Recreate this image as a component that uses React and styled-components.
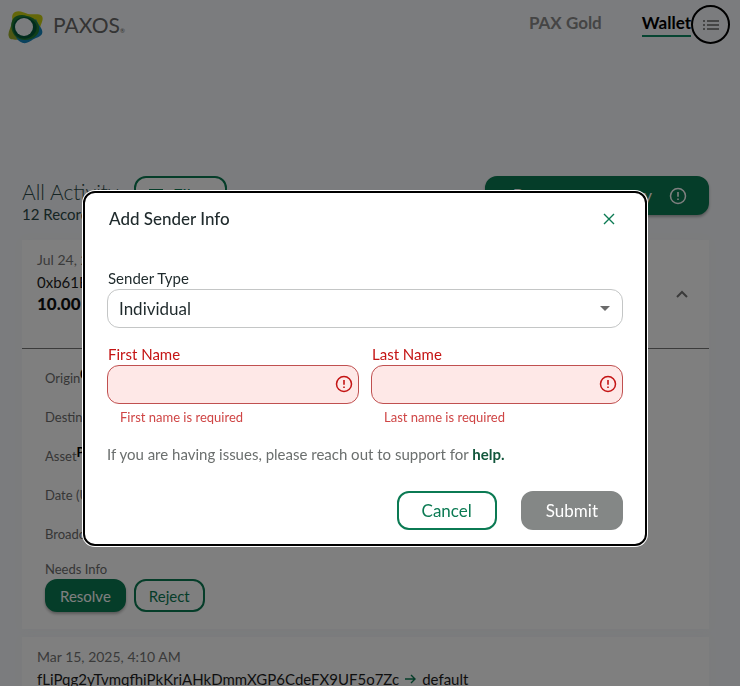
import React from 'react'
import styled, { createGlobalStyle } from 'styled-components'

const GlobalStyle = createGlobalStyle`
  * { box-sizing: border-box; }
  body {
    margin: 0;
    height: 100vh;
    overflow: hidden;
    background: #f7f9fc;
    color: #1f2a2c;
    font-family: Lato, "Open Sans", sans-serif;
    font-size: 15px;
  }
  button, input, select { font-family: inherit; }
  button { cursor: pointer; }
`

const Header = styled.header`
  display: flex;
  align-items: flex-start;
  justify-content: space-between;
  height: 48px;
  padding: 5px 10px 0 8px;
`

const Brand = styled.a`
  display: flex;
  align-items: center;
  gap: 9px;
  padding-top: 3px;
  color: #686868;
  font-size: 21px;
  line-height: 34px;
  text-decoration: none;
  small { font-size: 6px; }
`

const Nav = styled.nav`
  display: flex;
  align-items: flex-start;
`

const NavLink = styled.a`
  margin-left: 40px;
  padding-top: 6px;
  font-size: 17px;
  font-weight: 700;
  line-height: 24px;
  text-decoration: none;
  color: ${p => (p.$active ? '#000' : '#8a8a8a')};
  border-bottom: 2px solid ${p => (p.$active ? '#0f8a64' : 'transparent')};
`

const MenuButton = styled.button`
  display: flex;
  align-items: center;
  justify-content: center;
  width: 39px;
  height: 39px;
  padding: 0;
  border: 2px solid #000;
  border-radius: 50%;
  background: transparent;
  color: #8a8a8a;
`

const Main = styled.main`
  padding: 128px 31px 0 22px;
`

const ActivityBar = styled.div`
  display: flex;
  align-items: flex-start;
  height: 64px;
`

const Heading = styled.div`
  width: 112px;
  white-space: nowrap;
  color: #2d4a48;
  h1 {
    margin: 0;
    padding-top: 3px;
    font-size: 21px;
    font-weight: 300;
    line-height: 26px;
  }
  p {
    margin: 0;
    line-height: 18px;
  }
`

const Button = styled.button`
  display: flex;
  align-items: center;
  justify-content: center;
  gap: 10px;
  height: ${p => (p.$small ? '33px' : '39px')};
  padding: 0 ${p => (p.$small ? '13px' : '23px')};
  border: 2px solid #0b7a53;
  border-radius: 12px;
  background: #fff;
  color: #0b7a53;
  font-size: ${p => (p.$small ? '15px' : '17px')};
`

const FilterButton = styled(Button)`
  padding: 0 13px;
`

const FilledButton = styled(Button)`
  background: #0b7a53;
  color: #fff;
  box-shadow: 0 2px 3px rgba(0, 0, 0, 0.3);
`

const SubmitButton = styled(Button)`
  border-color: #848786;
  background: #848786;
  color: #fff;
`

const PendingButton = styled(FilledButton)`
  margin-left: auto;
  padding: 0 20px 0 26px;
  gap: 17px;
`

const Card = styled.section`
  margin-bottom: 8px;
  background: #fff;
  box-shadow: 0 0 12px #f4f6f8;
`

const Summary = styled.div`
  display: flex;
  align-items: center;
  justify-content: space-between;
  height: 109px;
  padding: 0 20px 0 15px;
  border-bottom: ${p => (p.$open ? '1px solid #777' : '0')};
`

const Lines = styled.div`
  align-self: flex-start;
  padding-top: 9px;
  color: #1c1c1c;
  line-height: 22px;
  time {
    display: block;
    color: #757575;
    font-size: 14px;
  }
  strong {
    display: block;
    color: #111;
    font-size: 17px;
    font-weight: 900;
  }
`

const Address = styled.div`
  display: flex;
  align-items: center;
  gap: 5px;
  svg { color: #0b7a53; }
`

const Details = styled.div`
  padding: 10px 23px 17px;
`

const DetailRow = styled.div`
  height: 39px;
  color: #6d6d6d;
  font-size: 13px;
  line-height: 38px;
  b {
    color: #000;
    vertical-align: 4px;
    line-height: 1;
  }
`

const NeedsInfo = styled.div`
  padding-top: 5px;
  color: #6d6d6d;
  font-size: 13px;
  line-height: 20px;
`

const Actions = styled.div`
  display: flex;
  justify-content: ${p => (p.$end ? 'flex-end' : 'flex-start')};
  gap: ${p => (p.$end ? '24px' : '8px')};
`

const Overlay = styled.div`
  position: fixed;
  inset: 0;
  display: flex;
  align-items: center;
  justify-content: center;
  padding: 50px 10px 0 0;
  background: rgba(0, 0, 0, 0.5);
`

const Dialog = styled.form`
  width: 100%;
  max-width: 564px;
  padding: 14px 22px;
  border: 2px solid #000;
  border-radius: 12px;
  background: #fff;
  box-shadow: 0 0 0 1px #fff;
`

const DialogHeader = styled.div`
  display: flex;
  align-items: center;
  justify-content: space-between;
  margin-bottom: 36px;
  padding: 0 8px 0 2px;
  h2 {
    margin: 0;
    font-size: 17px;
    font-weight: 500;
    line-height: 24px;
  }
`

const CloseButton = styled.button`
  display: flex;
  padding: 0;
  border: 0;
  background: transparent;
  color: #0b7a53;
`

const Field = styled.div`
  flex: 1;
  min-width: 0;
  label {
    display: block;
    padding-left: 1px;
    color: ${p => (p.$error ? '#c41414' : '#1f2a2c')};
    line-height: 22px;
  }
`

const Control = styled.div`
  position: relative;
  svg {
    position: absolute;
    right: ${p => (p.$select ? '13px' : '6px')};
    top: 0;
    bottom: 0;
    margin: auto;
    color: ${p => (p.$select ? '#6b6b6b' : '#c41414')};
    pointer-events: none;
  }
`

const Select = styled.select`
  display: block;
  width: 100%;
  height: 39px;
  padding: 0 36px 0 11px;
  appearance: none;
  border: 1px solid #c4c6c6;
  border-radius: 12px;
  background: #fff;
  color: #1f2a2c;
  font-size: 17px;
`

const Input = styled.input`
  display: block;
  width: 100%;
  height: 39px;
  padding: 0 32px 0 12px;
  border: 1px solid #c05050;
  border-radius: 12px;
  outline: none;
  background: #fee8e7;
  font-size: 17px;
`

const FieldRow = styled.div`
  display: flex;
  gap: 12px;
  margin-top: 15px;
`

const ErrorText = styled.p`
  margin: 3px 0 0 13px;
  color: #cf4545;
  font-size: 13px;
  line-height: 20px;
`

const Help = styled.p`
  margin: 16px 0 26px;
  color: #6b6f6e;
  line-height: 22px;
  a {
    color: #12573c;
    font-weight: 700;
    text-decoration: none;
  }
`

const Logo = () => (
  <svg width="36" height="34" viewBox="0 0 36 34" aria-hidden="true">
    <path d="M7 1C11-1 15 1 20 3c5 1 11-1 14 2 2 4-1 7-2 12L9 16C4 12 2 4 7 1Z" fill="#c9cf12" />
    <path d="M1 26C-1 22 3 17 4 11 5 5 9 4 14 5l6 20-7 4C9 28 2 30 1 26Z" fill="#9cae2a" />
    <path d="M33 17c3 5 1 8-5 10-5 2-8 6-13 5-3-1-6-3-7-6L28 8c1 3 3 6 5 9Z" fill="#1484bd" />
    <path d="M5 8C8 4 14 3 19 5c7 1 11 6 12 11 1 6-3 10-8 12-6 2-12 1-16-3C3 20 2 13 5 8Z" fill="#237f35" />
    <path d="M8 9c5-4 12-4 16 0 5 3 6 8 3 13-4 6-11 7-17 4C5 23 3 14 8 9Z" fill="#03583a" />
    <circle cx="16" cy="16" r="9" fill="#f7f9fc" />
  </svg>
)

const ListIcon = () => (
  <svg width="18" height="14" viewBox="0 0 18 14" fill="currentColor" aria-hidden="true">
    <path d="M1 2h2v2H1zM5 2h12v2H5zM1 6h2v2H1zM5 6h12v2H5zM1 10h2v2H1zM5 10h12v2H5z" />
  </svg>
)

const AlertIcon = () => (
  <svg width="18" height="18" viewBox="0 0 18 18" fill="none" stroke="currentColor" aria-hidden="true">
    <circle cx="9" cy="9" r="7.5" strokeWidth="1.5" />
    <path d="M9 5v4.8M9 11.4v1.6" strokeWidth="1.6" />
  </svg>
)

const CloseIcon = () => (
  <svg width="12" height="12" viewBox="0 0 12 12" stroke="currentColor" strokeWidth="1.4" aria-hidden="true">
    <path d="M1 1l10 10M11 1L1 11" />
  </svg>
)

const CaretIcon = () => (
  <svg width="10" height="5" viewBox="0 0 10 5" fill="currentColor" aria-hidden="true">
    <path d="M0 0h10L5 5z" />
  </svg>
)

const ChevronIcon = () => (
  <svg width="14" height="10" viewBox="0 0 14 10" fill="none" stroke="#757575" strokeWidth="2" aria-hidden="true">
    <path d="M2 8l5-5 5 5" />
  </svg>
)

const ArrowIcon = () => (
  <svg width="13" height="12" viewBox="0 0 13 12" fill="none" stroke="currentColor" strokeWidth="1.4" aria-hidden="true">
    <path d="M1 6h10M7 2l4 4-4 4" />
  </svg>
)

const FilterIcon = () => (
  <svg width="14" height="14" viewBox="0 0 14 14" stroke="currentColor" strokeWidth="2" aria-hidden="true">
    <path d="M0 1h14M2 6h10M5 11h4" />
  </svg>
)

const details = [
  ['Origin', '0xb61E'],
  ['Destination', ''],
  ['Asset', 'PAXG'],
  ['Date (UTC)', ''],
  ['Broadcast', ''],
]

const NameField = ({ id, label, error }) => (
  <Field $error>
    <label htmlFor={id}>{label}</label>
    <Control>
      <Input id={id} type="text" aria-invalid="true" aria-describedby={`${id}-error`} />
      <AlertIcon />
    </Control>
    <ErrorText id={`${id}-error`}>{error}</ErrorText>
  </Field>
)

const App = () => {
  return (
    <>
      <GlobalStyle />
      <Header>
        <Brand href="#">
          <Logo />
          <span>PAXOS<small>®</small></span>
        </Brand>
        <Nav>
          <NavLink href="#gold">PAX Gold</NavLink>
          <NavLink href="#wallet" $active>Wallet</NavLink>
          <MenuButton aria-label="Menu"><ListIcon /></MenuButton>
        </Nav>
      </Header>
      <Main>
        <ActivityBar>
          <Heading>
            <h1>All Activity</h1>
            <p>12 Records</p>
          </Heading>
          <FilterButton><FilterIcon />Filter</FilterButton>
          <PendingButton>Process a currency<AlertIcon /></PendingButton>
        </ActivityBar>
        <Card>
          <Summary $open>
            <Lines>
              <time>Jul 24, 2025</time>
              <Address>0xb61E</Address>
              <strong>10.00 PAXG</strong>
            </Lines>
            <ChevronIcon />
          </Summary>
          <Details>
            {details.map(([label, value]) => (
              <DetailRow key={label}>{label}<b>{value}</b></DetailRow>
            ))}
            <NeedsInfo>Needs Info</NeedsInfo>
            <Actions>
              <FilledButton $small>Resolve</FilledButton>
              <Button $small>Reject</Button>
            </Actions>
          </Details>
        </Card>
        <Card>
          <Summary>
            <Lines>
              <time>Mar 15, 2025, 4:10 AM</time>
              <Address>fLiPqg2yTvmqfhiPkKriAHkDmmXGP6CdeFX9UF5o7Zc <ArrowIcon /> default</Address>
            </Lines>
          </Summary>
        </Card>
      </Main>
      <Overlay>
        <Dialog role="dialog" aria-labelledby="dialog-title" onSubmit={e => e.preventDefault()}>
          <DialogHeader>
            <h2 id="dialog-title">Add Sender Info</h2>
            <CloseButton type="button" aria-label="Close"><CloseIcon /></CloseButton>
          </DialogHeader>
          <Field>
            <label htmlFor="sender-type">Sender Type</label>
            <Control $select>
              <Select id="sender-type" defaultValue="Individual">
                <option>Individual</option>
              </Select>
              <CaretIcon />
            </Control>
          </Field>
          <FieldRow>
            <NameField id="first-name" label="First Name" error="First name is required" />
            <NameField id="last-name" label="Last Name" error="Last name is required" />
          </FieldRow>
          <Help>
            If you are having issues, please reach out to support for <a href="#help">help.</a>
          </Help>
          <Actions $end>
            <Button type="button">Cancel</Button>
            <SubmitButton type="submit">Submit</SubmitButton>
          </Actions>
        </Dialog>
      </Overlay>
    </>
  )
}

export default App
